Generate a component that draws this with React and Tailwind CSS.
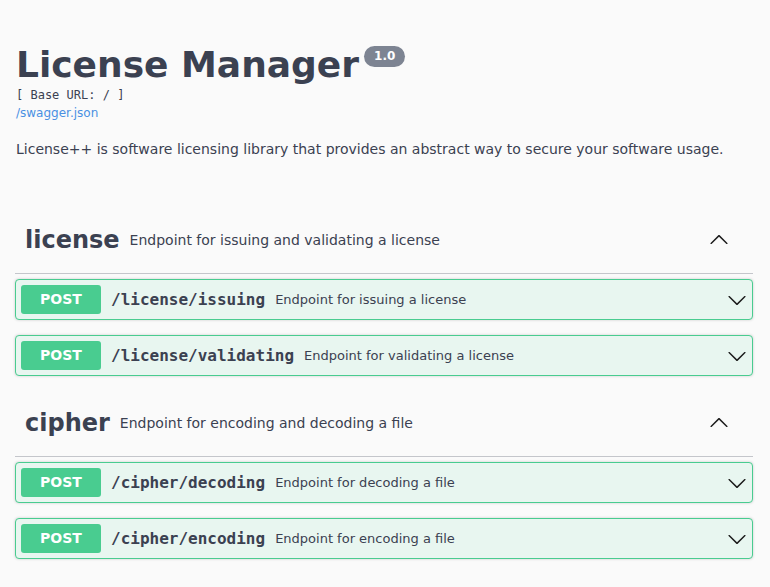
import React from "react";

const tags = [
  {
    name: "license",
    desc: "Endpoint for issuing and validating a license",
    ops: [
      { path: "/license/issuing", summary: "Endpoint for issuing a license" },
      { path: "/license/validating", summary: "Endpoint for validating a license" },
    ],
  },
  {
    name: "cipher",
    desc: "Endpoint for encoding and decoding a file",
    ops: [
      { path: "/cipher/decoding", summary: "Endpoint for decoding a file" },
      { path: "/cipher/encoding", summary: "Endpoint for encoding a file" },
    ],
  },
];

function Arrow({ up = false }) {
  return (
    <svg width="20" height="20" viewBox="0 0 20 20" className={up ? "rotate-180" : ""} fill="#1b1b1b">
      <path d="M17.418 6.109c.272-.268.709-.268.979 0s.271.701 0 .969l-7.908 7.83c-.27.268-.707.268-.979 0l-7.908-7.83c-.27-.268-.27-.701 0-.969.271-.268.709-.268.979 0L10 13.25l7.418-7.141z" />
    </svg>
  );
}

function Operation({ op, last }) {
  return (
    <div className={"flex items-center rounded-[4px] border border-[#49cc90] bg-[#e8f6f0] p-[5px] shadow-[0_0_3px_rgba(0,0,0,0.19)] " + (last ? "mb-[14px]" : "mb-[15px]")}>
      <span className="flex h-[29px] w-[80px] shrink-0 items-center justify-center rounded-[3px] bg-[#49cc90] text-[14px] font-bold text-white">
        POST
      </span>
      <span className="pl-[10px] pr-[10px] font-['DejaVu_Sans_Mono',monospace] text-[16px] font-bold text-[#3b4151]">
        {op.path}
      </span>
      <span className="flex-1 text-[13px] text-[#3b4151]">{op.summary}</span>
      <span className="flex items-center">
        <Arrow />
      </span>
    </div>
  );
}

export default function App() {
  return (
    <div className="min-h-screen bg-[#fafafa] font-['DejaVu_Sans',sans-serif] text-[#3b4151]">
      <div className="pl-[15px] pr-[17px]">
        {/* Info */}
        <div className="pt-[42px] pb-[48px] pl-[1px]">
          <div className="flex items-start">
            <h1 className="m-0 text-[36px] leading-[45px] font-bold text-[#3b4151]">License Manager</h1>
            <span className="mt-[4px] ml-[5px] rounded-[57px] bg-[#7d8492] px-[10px] py-[3px] text-[12px] leading-[15px] font-bold text-white">
              1.0
            </span>
          </div>
          <div className="font-['DejaVu_Sans_Mono',monospace] text-[12px] leading-[16px]">[ Base URL: / ]</div>
          <div className="text-[12px] leading-[20px] text-[#4990e2]">/swagger.json</div>
          <p className="mt-[16px] text-[14px] leading-[20px]">
            License++ is software licensing library that provides an abstract way to secure your software usage.
          </p>
        </div>

        {tags.map((tag) => (
          <div key={tag.name}>
            <div className="mb-[5px] flex items-center border-b border-[#c4c6cb] py-[10px] pr-[24px] pl-[10px]">
              <span className="text-[24px] leading-[46px] font-bold">{tag.name}</span>
              <span className="flex-1 pl-[10px] text-[14px]">{tag.desc}</span>
              <span className="flex items-center">
                <Arrow up />
              </span>
            </div>
            {tag.ops.map((op, i) => (
              <Operation key={op.path} op={op} last={i === tag.ops.length - 1} />
            ))}
          </div>
        ))}
      </div>
    </div>
  );
}
